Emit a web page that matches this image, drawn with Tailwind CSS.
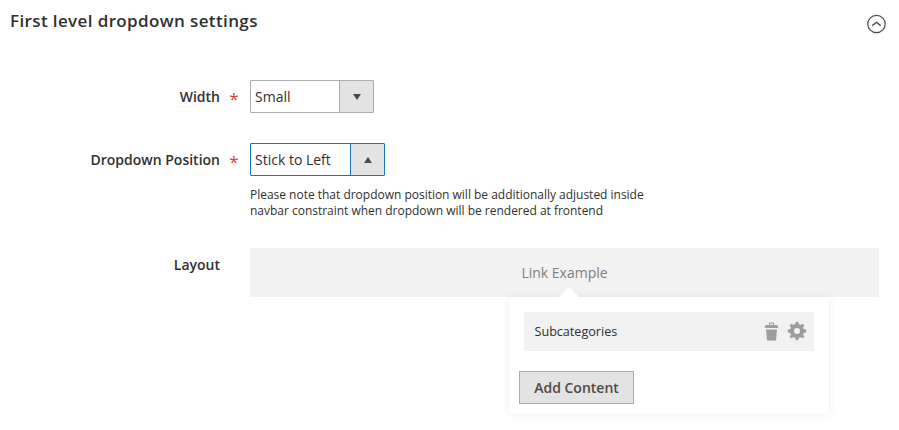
<!DOCTYPE html>
<html lang="en">
<head>
<meta charset="utf-8">
<title>First level dropdown settings</title>
<script src="https://cdn.jsdelivr.net/npm/@tailwindcss/browser@4"></script>
</head>
<body class="h-[430px] overflow-hidden bg-white font-['Open_Sans','Noto_Sans',sans-serif] text-[14px] text-[#303030]">
<header class="flex h-20 items-start justify-between pl-2.5 pr-[13px]">
  <h1 class="mt-[9px] text-[17px] font-semibold leading-6 tracking-[0.38px]">First level dropdown settings</h1>
  <svg class="mt-[14px] size-5" viewBox="0 0 20 20" fill="none" stroke="#514943"><circle cx="10.5" cy="10" r="8.7" stroke-width="1.2"/><path d="M6.300 11.600 10.500 8.300l4.200 3.300" stroke-width="1.4"/></svg>
</header>
<main class="grid grid-cols-[220px_629px] gap-x-[30px]">
  <label class="relative h-[63px] text-right font-semibold leading-[33px]">Width<span class="absolute -right-[18.5px] top-[2px] text-[17px] font-normal text-[#d63a3a]">*</span></label>
  <div class="h-[63px]">
    <div class="flex h-[33px] w-[124px] rounded-[1px] border border-[#adadad] leading-[32px]">
      <span class="flex-1 pl-1">Small</span>
      <span class="flex w-[34px] items-center justify-center border-l border-[#adadad] bg-[#e3e3e3]"><svg class="h-[6px] w-2" viewBox="0 0 8 6" fill="#514943"><path d="M0 0h8L4 6z"/></svg></span>
    </div>
  </div>
  <label class="relative h-[105px] text-right font-semibold leading-[33px]">Dropdown Position<span class="absolute -right-[18.5px] top-[2px] text-[17px] font-normal text-[#d63a3a]">*</span></label>
  <div class="h-[105px]">
    <div class="flex h-[33px] w-[135px] rounded-[1px] border border-[#1a74b5] leading-[32px]">
      <span class="flex-1 pl-1">Stick to Left</span>
      <span class="flex w-[34px] items-center justify-center border-l border-[#1a74b5] bg-[#e3e3e3]"><svg class="h-[6px] w-2" viewBox="0 0 8 6" fill="#514943"><path d="M0 6h8L4 0z"/></svg></span>
    </div>
    <p class="mt-[11px] text-[12px] leading-4 tracking-[-0.015px]">Please note that dropdown position will be additionally adjusted inside<br>navbar constraint when dropdown will be rendered at frontend</p>
  </div>
  <label class="text-right font-semibold leading-[34px]">Layout</label>
  <div>
    <div class="h-[49px] bg-[#f2f2f2] text-center leading-[50px] text-[#808080]">Link Example</div>
    <div class="relative ml-[259px] h-[117px] w-[320px] bg-white px-2.5 pt-[15px] shadow-[0_0_8px_rgba(0,0,0,0.08)]">
      <svg class="absolute -top-[10px] left-[50px] h-[10px] w-5" viewBox="0 0 20 10" fill="#fff"><path d="M0 10 10 0l10 10z"/></svg>
      <div class="mx-[5px] flex h-[39px] items-center bg-[#f2f2f2] pl-[10.5px] pr-[7px] text-[12.6px]">
        <span class="flex-1 pt-0.5">Subcategories</span>
        <svg class="mr-2 h-[19px] w-[15px]" viewBox="0 0 15 19" fill="#9e9e9e"><path fill-rule="evenodd" d="M5 3V.5h5V3h2.500l1.500.8V6H1V3.800L2.500 3zM6.200 1.600V3h2.600V1.600z"/><path d="M2 7.500h11l-1 11H3z"/></svg>
        <svg class="mb-px size-5" viewBox="-10 -10 20 20" fill="#9e9e9e"><circle r="5" fill="none" stroke="#9e9e9e" stroke-width="4"/><g id="teeth"><path id="tooth" d="M-2.200-6-1.200-9.200h2.400L2.200-6z"/><use href="#tooth" transform="rotate(45)"/><use href="#tooth" transform="rotate(90)"/><use href="#tooth" transform="rotate(135)"/></g><use href="#teeth" transform="rotate(180)"/></svg>
      </div>
      <button class="mt-5 block h-[33px] w-[115px] border border-[#adadad] bg-[#e3e3e3] text-[14px] font-semibold text-[#514943]">Add Content</button>
    </div>
  </div>
</main>
</body>
</html>
